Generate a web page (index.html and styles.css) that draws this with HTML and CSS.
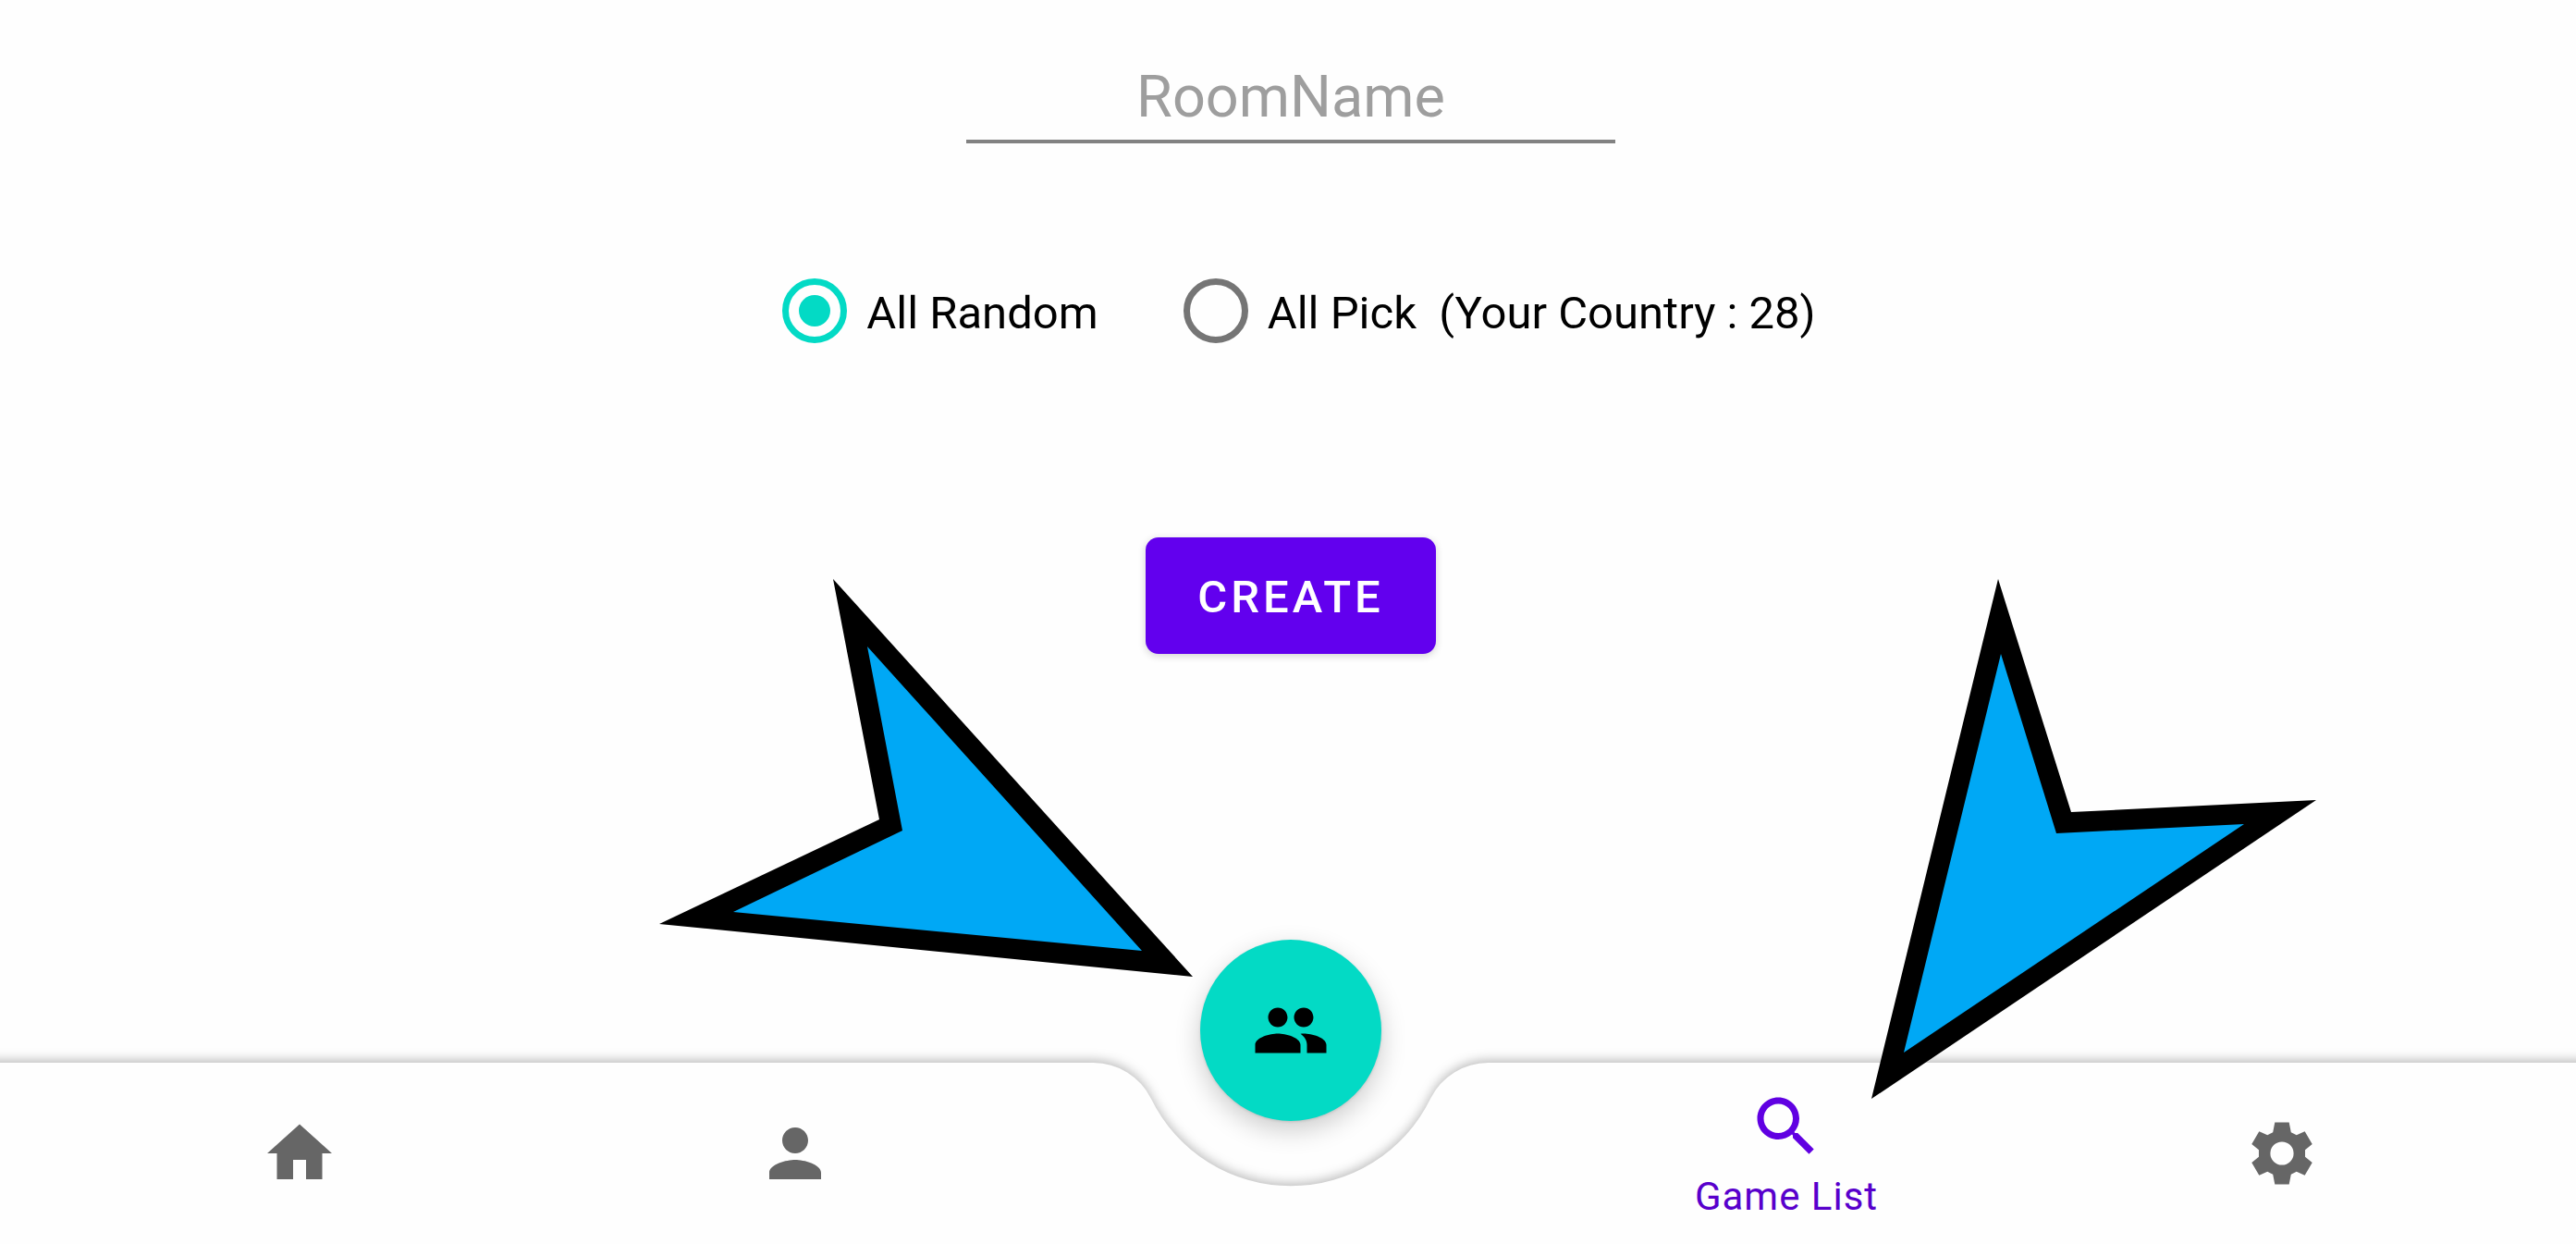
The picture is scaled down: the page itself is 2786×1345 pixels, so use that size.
FILE: index.html
```html
<!DOCTYPE html>
<html lang="en">
<head>
  <meta charset="utf-8">
  <meta name="viewport" content="width=device-width, initial-scale=1">
  <title>Create Room</title>
  <link rel="stylesheet" href="styles.css">
</head>
<body>
  <div class="screen">
    <main class="main">
      <form class="room-form">
        <input class="room-name" type="text" placeholder="RoomName" aria-label="RoomName">
        <div class="modes" role="radiogroup" aria-label="Country selection">
          <label class="mode">
            <input class="mode-radio" type="radio" name="mode" value="random" checked>
            <span class="mode-label">All Random</span>
          </label>
          <label class="mode">
            <input class="mode-radio" type="radio" name="mode" value="pick">
            <span class="mode-label">All Pick&nbsp; (Your Country : 28)</span>
          </label>
        </div>
        <button class="create" type="button">CREATE</button>
      </form>
    </main>

    <nav class="bar" aria-label="Main">
      <div class="bar-shape" aria-hidden="true">
        <div class="bar-side"></div>
        <svg class="bar-notch" viewBox="0 0 428 196">
          <path d="M0 0A70 70 0 0 1 63 39A168 168 0 0 0 365 39A70 70 0 0 1 428 0V196H0Z"/>
        </svg>
        <div class="bar-side"></div>
      </div>
      <div class="bar-items">
        <a class="item" href="#home" aria-label="Home">
          <svg class="icon" viewBox="0 0 24 24"><path d="M10 20v-6h4v6h5v-8h3L12 3 2 12h3v8z"/></svg>
        </a>
        <a class="item" href="#profile" aria-label="Profile">
          <svg class="icon" viewBox="0 0 24 24"><path d="M12 12c2.21 0 4-1.79 4-4s-1.79-4-4-4-4 1.79-4 4 1.79 4 4 4zm0 2c-2.67 0-8 1.34-8 4v2h16v-2c0-2.66-5.33-4-8-4z"/></svg>
        </a>
        <div class="fab-slot">
          <button class="fab" type="button" aria-label="Players">
            <svg class="icon" viewBox="0 0 24 24"><path d="M16 11c1.66 0 2.99-1.34 2.99-3S17.66 5 16 5c-1.66 0-3 1.34-3 3s1.34 3 3 3zm-8 0c1.66 0 2.99-1.34 2.99-3S9.66 5 8 5C6.34 5 5 6.34 5 8s1.34 3 3 3zm0 2c-2.33 0-7 1.17-7 3.5V19h14v-2.5c0-2.33-4.67-3.5-7-3.5zm8 0c-.29 0-.62.02-.97.05 1.16.84 1.97 1.97 1.97 3.45V19h6v-2.5c0-2.33-4.67-3.5-7-3.5z"/></svg>
          </button>
        </div>
        <a class="item item-active" href="#games" aria-current="page">
          <svg class="icon" viewBox="0 0 24 24"><path d="M15.5 14h-.79l-.28-.27C15.41 12.59 16 11.11 16 9.5 16 5.91 13.09 3 9.5 3S3 5.91 3 9.5 5.91 16 9.5 16c1.61 0 3.09-.59 4.23-1.57l.27.28v.79l5 4.99L20.49 19l-4.99-5zm-6 0C7.01 14 5 11.99 5 9.5S7.01 5 9.5 5 14 7.01 14 9.5 11.99 14 9.5 14z"/></svg>
          <span class="item-label">Game List</span>
        </a>
        <a class="item" href="#settings" aria-label="Settings">
          <svg class="icon" viewBox="0 0 24 24"><path fill-rule="evenodd" d="M9.8 2.4H14.2L14.8 5.5 16.5 6.35 19.05 5.2 21.35 9.15 19.15 10.95V13.05L21.35 14.85 19.05 18.8 16.5 17.65 14.8 18.5 14.2 21.6H9.8L9.2 18.5 7.5 17.65 4.95 18.8 2.65 14.85 4.85 13.05V10.95L2.65 9.15 4.95 5.2 7.5 6.35 9.2 5.5ZM12 8.4A3.6 3.6 0 0 0 12 15.6A3.6 3.6 0 0 0 12 8.4Z"/></svg>
        </a>
      </div>
    </nav>

    <svg class="pointer pointer-fab" viewBox="713 626 577 430" aria-hidden="true">
      <path d="M901 626L1290 1056 713 999 951 886Z"/>
      <path class="pointer-fill" d="M938 699L1235 1028 793 986 976 898Z"/>
    </svg>
    <svg class="pointer pointer-list" viewBox="2024 626 481 562" aria-hidden="true">
      <path d="M2161 626L2240 878 2505 865 2024 1188Z"/>
      <path class="pointer-fill" d="M2164 707L2224 901 2427 891 2059 1138Z"/>
    </svg>
  </div>
</body>
</html>
```
FILE: styles.css
```css
* {
  box-sizing: border-box;
}

body {
  margin: 0;
  overflow-x: hidden;
  background: #fefefe;
  color: #000;
  font-family: Roboto, "Liberation Sans", sans-serif;
  font-size: 49px;
}

.screen {
  position: relative;
  display: flex;
  flex-direction: column;
  min-height: 100vh;
  margin-right: -6px;
}

.main {
  flex: 1;
  padding: 68px 0 140px;
}

.room-form {
  display: flex;
  flex-direction: column;
  align-items: center;
}

.room-name {
  width: 702px;
  max-width: 90%;
  padding: 0 0 9px;
  border: 0;
  border-bottom: 4px solid #828282;
  border-radius: 0;
  outline: 0;
  background: none;
  color: #000;
  font: 63px/74px Roboto, "Liberation Sans", sans-serif;
  text-align: center;
}

.room-name::placeholder {
  color: #9e9e9e;
  opacity: 1;
}

.modes {
  display: flex;
  flex-wrap: wrap;
  justify-content: center;
  gap: 32px 74px;
  margin-top: 146px;
}

.mode {
  display: flex;
  align-items: center;
  gap: 21px;
  padding-left: 18px;
}

.mode-radio {
  appearance: none;
  display: grid;
  place-items: center;
  width: 70px;
  height: 70px;
  margin: 0;
  border: 7px solid #757575;
  border-radius: 50%;
}

.mode-radio:checked {
  border-color: #03dac5;
}

.mode-radio:checked::before {
  content: "";
  width: 34px;
  height: 34px;
  border-radius: 50%;
  background: #03dac5;
}

.mode-label {
  padding-top: 5px;
  line-height: 58px;
}

.create {
  height: 126px;
  margin-top: 210px;
  padding: 4px 56px 0;
  border: 0;
  border-radius: 14px;
  background: #6200ee;
  box-shadow: 0 2px 8px rgba(0, 0, 0, 0.18);
  color: #fff;
  font: 500 49px/58px Roboto, "Liberation Sans", sans-serif;
  letter-spacing: 4px;
}

.bar {
  position: relative;
  height: 196px;
}

/* Runs past both sides, so that the shadow does not fade at the edges. */
.bar-shape {
  position: absolute;
  inset: 0 -24px;
  display: flex;
  filter: drop-shadow(0 -3px 6px rgba(0, 0, 0, 0.26));
}

.bar-side {
  flex: 1;
  background: #fefefe;
}

.bar-notch {
  width: 428px;
  height: 196px;
  fill: #fefefe;
}

.bar-items {
  position: relative;
  display: grid;
  grid-template-columns: repeat(5, 1fr);
  height: 100%;
  padding: 0 56px;
}

.item {
  display: flex;
  flex-direction: column;
  align-items: center;
  justify-content: center;
  gap: 10px;
  color: #666;
  text-decoration: none;
}

.item-active {
  color: #6000e2;
}

.item-label {
  color: #5800cc;
  font-size: 42px;
  line-height: 48px;
  letter-spacing: 1px;
  white-space: nowrap;
}

.icon {
  display: block;
  width: 84px;
  height: 84px;
  fill: currentColor;
}

.fab-slot {
  position: relative;
  display: flex;
  justify-content: center;
}

/* The round button floats in the notch, above the bar. */
.fab {
  position: absolute;
  top: -133px;
  display: grid;
  place-items: center;
  width: 196px;
  height: 196px;
  padding: 0;
  border: 0;
  border-radius: 50%;
  background: #03dac5;
  box-shadow: 0 10px 28px rgba(0, 0, 0, 0.2), 0 1px 3px rgba(0, 0, 0, 0.12);
  color: #000;
}

/* Tutorial arrows drawn over the screen. */
.pointer {
  position: absolute;
  pointer-events: none;
}

.pointer-fab {
  bottom: 289px;
  left: calc(50% - 683px);
  width: 577px;
  height: 430px;
}

.pointer-list {
  bottom: 157px;
  left: calc(50% + 628px);
  width: 481px;
  height: 562px;
}

.pointer-fill {
  fill: #00a8f5;
}
```
